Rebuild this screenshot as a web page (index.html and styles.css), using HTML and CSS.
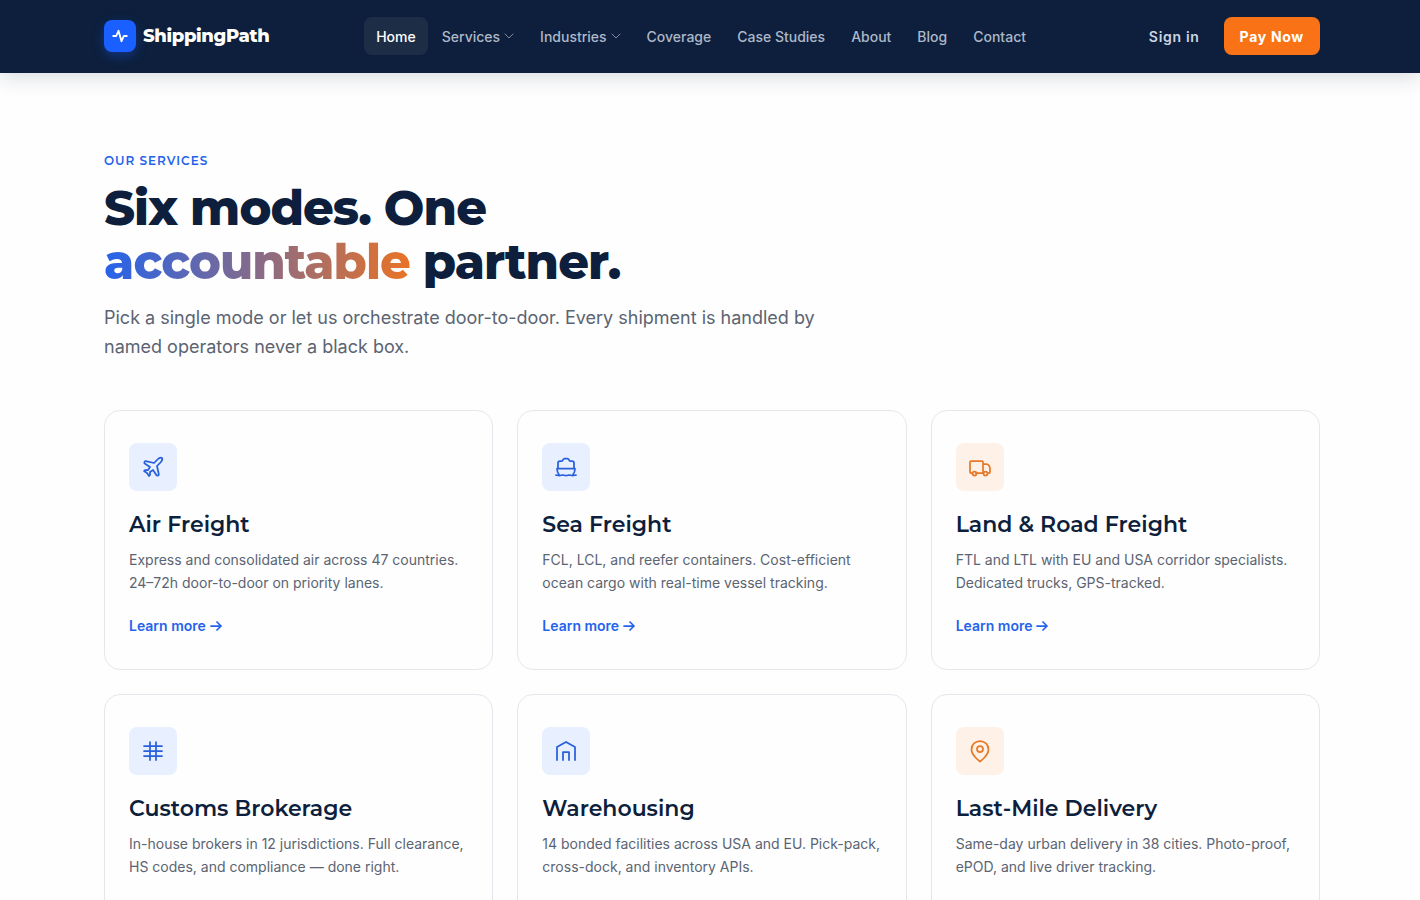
FILE: index.html
```html
<!DOCTYPE html>
<html lang="en">
<head>
  <meta charset="UTF-8">
  <meta name="viewport" content="width=device-width, initial-scale=1.0">
  <title>ShippingPath</title>
  <link rel="stylesheet" href="styles.css">
</head>
<body>
  <header class="site-header">
    <div class="container header-inner">
      <a class="logo" href="#">
        <span class="logo-mark">
          <svg width="18" height="18" viewBox="0 0 24 24"><path d="M3 12h4l3-7 4 14 3-7h4"/></svg>
        </span>
        ShippingPath
      </a>
      <nav class="main-nav">
        <a class="active" href="#">Home</a>
        <a href="#">Services <svg width="10" height="10" viewBox="0 0 10 10"><path d="M1 3l4 4 4-4"/></svg></a>
        <a href="#">Industries <svg width="10" height="10" viewBox="0 0 10 10"><path d="M1 3l4 4 4-4"/></svg></a>
        <a href="#">Coverage</a>
        <a href="#">Case Studies</a>
        <a href="#">About</a>
        <a href="#">Blog</a>
        <a href="#">Contact</a>
      </nav>
      <div class="header-actions">
        <a class="btn btn-ghost" href="#">Sign in</a>
        <a class="btn btn-pay" href="#">Pay Now</a>
      </div>
    </div>
  </header>

  <main class="container services">
    <div class="section-head">
      <p class="eyebrow">Our Services</p>
      <h1>Six modes. One<br><span class="gradient">accountable</span> partner.</h1>
      <p class="lead">Pick a single mode or let us orchestrate door-to-door. Every shipment is handled by named operators never a black box.</p>
    </div>

    <div class="grid">
      <article class="card">
        <span class="icon">
          <svg viewBox="0 0 24 24"><path d="M17.8 19.2 16 11l3.5-3.5C21 6 21.5 4 21 3c-1-.5-3 0-4.500 1.500L13 8 4.800 6.200c-.5-.1-.9.1-1.100.5l-.3.5c-.2.5-.1 1 .3 1.300L9 12l-2 3H4l-1 1 3 2 2 3 1-1v-3l3-2 3.500 5.300c.3.4.8.5 1.300.3l.5-.2c.4-.3.6-.7.5-1.200z"/></svg>
        </span>
        <h2>Air Freight</h2>
        <p>Express and consolidated air across 47 countries. 24–72h door-to-door on priority lanes.</p>
        <a class="more" href="#">Learn more <svg viewBox="0 0 12 12"><path d="M1 6h10M7 2l4 4-4 4"/></svg></a>
      </article>
      <article class="card">
        <span class="icon">
          <svg viewBox="0 0 24 24"><path d="M2 20c1.500 0 1.500.6 3.300.6s1.800-.6 3.400-.6 1.600.6 3.300.6 1.700-.6 3.300-.6 1.600.6 3.400.6 1.800-.6 3.300-.6M5 19.500c-1.300-1.500-2-3.500-2-6h18c0 2.500-.7 4.500-2 6M4 13.500V8a2 2 0 0 1 2-2h2c1 0 1-2.500 2.500-2.500h3C15 3.500 15 6 16 6h2a2 2 0 0 1 2 2v5.500"/></svg>
        </span>
        <h2>Sea Freight</h2>
        <p>FCL, LCL, and reefer containers. Cost-efficient ocean cargo with real-time vessel tracking.</p>
        <a class="more" href="#">Learn more <svg viewBox="0 0 12 12"><path d="M1 6h10M7 2l4 4-4 4"/></svg></a>
      </article>
      <article class="card">
        <span class="icon icon-orange">
          <svg viewBox="0 0 24 24"><path d="M4 18H3a1 1 0 0 1-1-1V7a1 1 0 0 1 1-1h11a1 1 0 0 1 1 1v11H8M15 9h3.500c1.800 0 3.500 2.500 3.500 5v3a1 1 0 0 1-1 1h-1"/><circle cx="6.500" cy="18.500" r="2"/><circle cx="17.500" cy="18.500" r="2"/></svg>
        </span>
        <h2>Land &amp; Road Freight</h2>
        <p>FTL and LTL with EU and USA corridor specialists. Dedicated trucks, GPS-tracked.</p>
        <a class="more" href="#">Learn more <svg viewBox="0 0 12 12"><path d="M1 6h10M7 2l4 4-4 4"/></svg></a>
      </article>
      <article class="card">
        <span class="icon">
          <svg viewBox="0 0 24 24"><path d="M3 7h18M3 12h18M3 17h18M9 3v18M15 3v18"/></svg>
        </span>
        <h2>Customs Brokerage</h2>
        <p>In-house brokers in 12 jurisdictions. Full clearance, HS codes, and compliance — done right.</p>
        <a class="more" href="#">Learn more <svg viewBox="0 0 12 12"><path d="M1 6h10M7 2l4 4-4 4"/></svg></a>
      </article>
      <article class="card">
        <span class="icon">
          <svg viewBox="0 0 24 24"><path d="M3 21V8l9-5 9 5v13M9 21v-8h6v8"/></svg>
        </span>
        <h2>Warehousing</h2>
        <p>14 bonded facilities across USA and EU. Pick-pack, cross-dock, and inventory APIs.</p>
        <a class="more" href="#">Learn more <svg viewBox="0 0 12 12"><path d="M1 6h10M7 2l4 4-4 4"/></svg></a>
      </article>
      <article class="card">
        <span class="icon icon-orange">
          <svg viewBox="0 0 24 24"><path d="M20.500 10.500c0 6-8.500 12-8.500 12s-8.500-6-8.500-12a8.500 8.500 0 0 1 17 0z"/><circle cx="12" cy="10" r="3"/></svg>
        </span>
        <h2>Last-Mile Delivery</h2>
        <p>Same-day urban delivery in 38 cities. Photo-proof, ePOD, and live driver tracking.</p>
        <a class="more" href="#">Learn more <svg viewBox="0 0 12 12"><path d="M1 6h10M7 2l4 4-4 4"/></svg></a>
      </article>
    </div>
  </main>
</body>
</html>
```

FILE: styles.css
```css
* {
  box-sizing: border-box;
}
body {
  margin: 0;
  font-family: Inter, sans-serif;
  background: #fefefe;
  color: #0d1f3c;
}
a {
  text-decoration: none;
}
svg {
  fill: none;
  stroke: currentColor;
  stroke-linecap: round;
  stroke-linejoin: round;
}
h1, h2, p {
  margin: 0;
}
.container {
  max-width: 1420px;
  margin: 0 auto;
  padding: 0 100px 0 104px;
}

/* header */
.site-header {
  background: #0d1f3c;
  border-bottom: 1px solid #0d1f3c;
  box-shadow: 0 4px 20px rgba(13, 31, 60, 0.16);
}
.header-inner {
  display: flex;
  align-items: center;
  justify-content: space-between;
  height: 72px;
}
.logo {
  display: flex;
  align-items: center;
  gap: 7px;
  color: #fff;
  font-family: Montserrat, Inter, sans-serif;
  font-size: 18px;
  font-weight: 800;
  letter-spacing: -0.02em;
}
.logo-mark {
  display: flex;
  align-items: center;
  justify-content: center;
  width: 32px;
  height: 32px;
  border-radius: 8px;
  background: #1a5fff;
  box-shadow: 0 4px 12px rgba(26, 95, 255, 0.35);
}
.logo-mark svg {
  stroke-width: 2.5;
}
.main-nav {
  display: flex;
  gap: 2px;
}
.main-nav a {
  display: flex;
  align-items: center;
  gap: 4px;
  height: 38px;
  padding: 0 12px;
  border-radius: 8px;
  color: #aeb8c9;
  font-size: 14px;
  font-weight: 500;
}
.main-nav svg {
  opacity: 0.7;
}
.main-nav .active {
  background: #1e2d46;
  color: #fff;
}
.header-actions {
  display: flex;
  gap: 8px;
}
.btn {
  display: flex;
  align-items: center;
  height: 38px;
  padding: 0 16px;
  border-radius: 8px;
  font-size: 14px;
  font-weight: 600;
  letter-spacing: 0.05em;
}
.btn-ghost {
  color: #cbd5e4;
}
.btn-pay {
  background: #f97316;
  color: #fff;
  font-weight: 700;
}

/* section heading */
.services {
  padding-top: 80px;
  padding-bottom: 80px;
}
.section-head {
  max-width: 720px;
  margin-bottom: 49px;
}
.eyebrow {
  margin-bottom: 12px;
  color: #2563eb;
  font-family: Montserrat, Inter, sans-serif;
  font-size: 12px;
  font-weight: 600;
  line-height: 16px;
  letter-spacing: 0.08em;
  text-transform: uppercase;
}
h1 {
  margin-bottom: 14px;
  font-family: Montserrat, Inter, sans-serif;
  font-size: 48px;
  font-weight: 800;
  line-height: 54px;
  letter-spacing: -0.02em;
}
.gradient {
  background: linear-gradient(90deg, #2563eb, #e97326);
  -webkit-background-clip: text;
  background-clip: text;
  color: transparent;
}
.lead {
  color: #5b6472;
  font-size: 18px;
  line-height: 29px;
}

/* service cards */
.grid {
  display: grid;
  grid-template-columns: repeat(3, 1fr);
  gap: 24px;
}
.card {
  padding: 32px 24px;
  border: 1px solid #e4e8ec;
  border-radius: 16px;
}
.icon {
  display: flex;
  align-items: center;
  justify-content: center;
  width: 48px;
  height: 48px;
  margin-bottom: 20px;
  border-radius: 8px;
  background: #e8effe;
  color: #2860dc;
}
.icon svg {
  width: 24px;
  height: 24px;
  stroke-width: 1.75;
}
.icon-orange {
  background: #fef1e7;
  color: #e57a2a;
}
h2 {
  margin-bottom: 9px;
  font-family: Montserrat, Inter, sans-serif;
  font-size: 22px;
  font-weight: 600;
  line-height: 28px;
}
.card p {
  margin-bottom: 20px;
  color: #5b6472;
  font-size: 14px;
  line-height: 23px;
}
.more {
  display: flex;
  align-items: center;
  gap: 4px;
  color: #2563eb;
  font-size: 14px;
  font-weight: 600;
  line-height: 23px;
}
.more svg {
  width: 12px;
  height: 12px;
  stroke-width: 1.75;
}
@media (max-width: 1000px) {
  .container {
    padding-left: 24px;
    padding-right: 24px;
  }
  .main-nav {
    display: none;
  }
  .grid {
    grid-template-columns: 1fr;
  }
}
```
